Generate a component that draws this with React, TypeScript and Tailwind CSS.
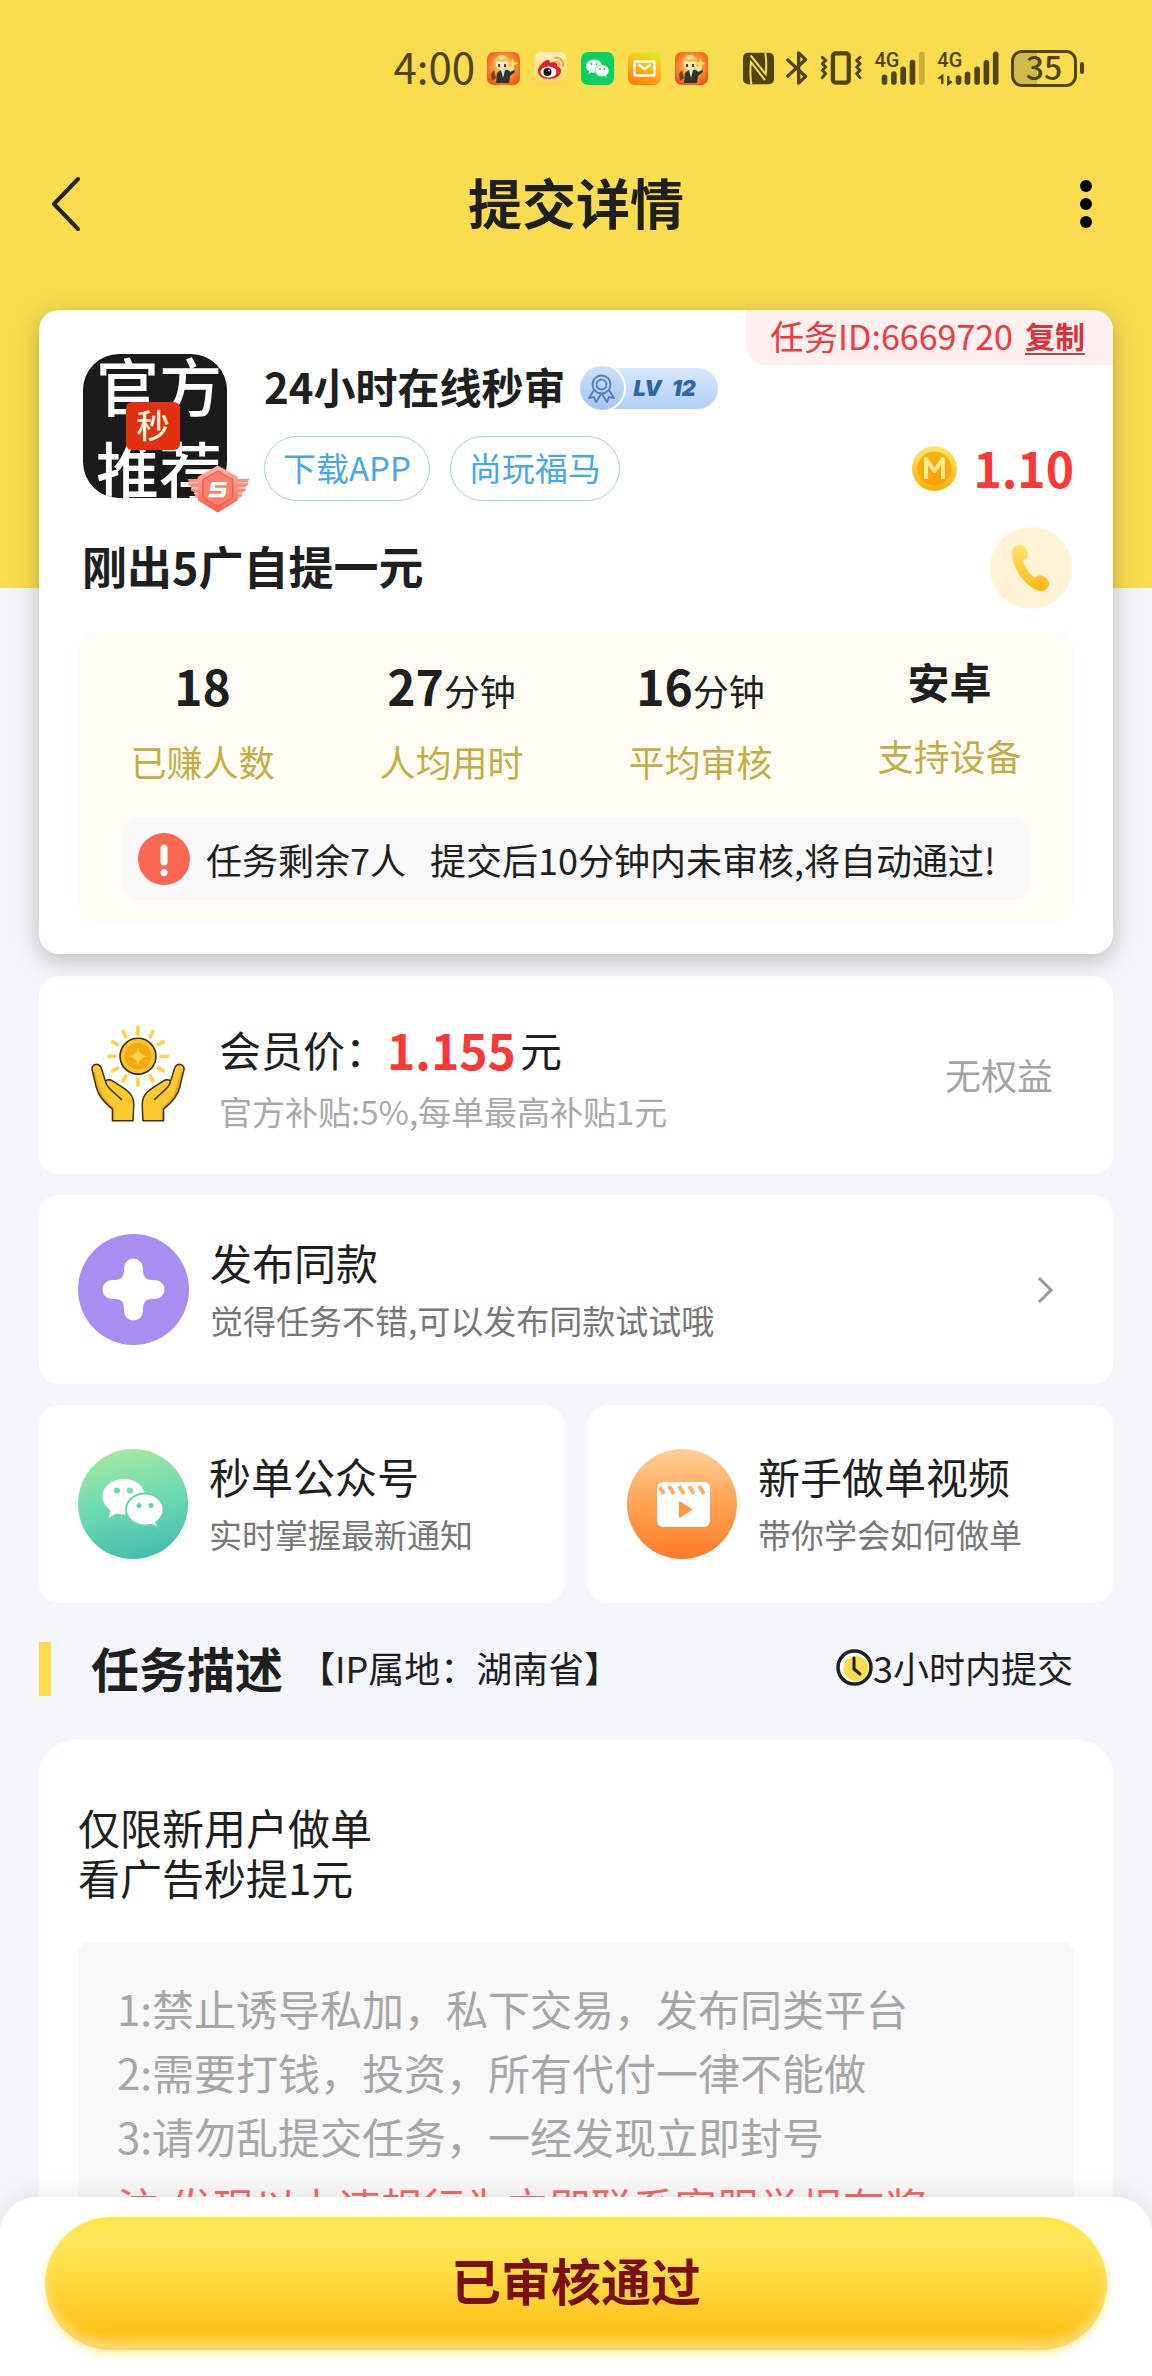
import React from 'react';

const INK = '#4f4412';

function MascotIcon() {
  return (
    <svg width="33" height="33" viewBox="0 0 33 33" aria-hidden="true">
      <defs>
        <radialGradient id="mascotBg" cx="0.5" cy="0.45" r="0.7">
          <stop offset="0" stopColor="#ffd46b" />
          <stop offset="0.55" stopColor="#f58a2c" />
          <stop offset="1" stopColor="#e8401f" />
        </radialGradient>
      </defs>
      <rect width="33" height="33" rx="7" fill="url(#mascotBg)" />
      <path d="M4 22l3-4 2 8-4 3z" fill="#7d3d12" />
      <path d="M9 31l1-10 4-3h6l3 1 4-2 1 3-5 4-1 7z" fill="#2e3230" />
      <path d="M14 18l2 8 2-8z" fill="#f7ead6" />
      <path d="M20 15l6-1 1 4-4 2z" fill="#ffe3a6" />
      <ellipse cx="15" cy="12" rx="6.500" ry="6" fill="#ffeccb" />
      <path d="M7 13c0-7 4-10 8-10s8 3 8 10l-3-4-5 1-5-1z" fill="#f9bd52" />
      <path d="M11 4l5-1 3 3-6 2z" fill="#ffe89a" />
      <rect x="11" y="12" width="2" height="3" fill="#8c2b16" />
      <rect x="17" y="12" width="2" height="3" fill="#8c2b16" />
      <path d="M26 6l1 4 4 1-4 2-1 4-2-4-3-2 3-1z" fill="#ffe45c" />
    </svg>
  );
}

function WeiboIcon() {
  return (
    <svg width="33" height="33" viewBox="0 0 33 33" aria-hidden="true">
      <defs>
        <linearGradient id="weiboBg" x1="0" y1="0" x2="0" y2="1">
          <stop offset="0" stopColor="#fdeec0" />
          <stop offset="1" stopColor="#fcd650" />
        </linearGradient>
      </defs>
      <rect width="33" height="33" rx="7" fill="url(#weiboBg)" />
      <path d="M11 9c3-2 5-1 5 2 4-2 8-1 7 3 3 1 4 3 4 5 0 5-6 8-12 8S4 24 4 19c0-4 4-8 7-10z" fill="#dd1f26" />
      <ellipse cx="14.500" cy="20" rx="8" ry="5.500" fill="#fff" />
      <circle cx="13.500" cy="20" r="4" fill="#111" />
      <circle cx="15" cy="18.500" r="1" fill="#fff" />
      <path d="M21 6c5-1 9 3 8 8M21.500 10c2.500-.5 4.200 1.500 3.700 4" fill="none" stroke="#f3a64a" strokeWidth="2" strokeLinecap="round" />
    </svg>
  );
}

function WechatAppIcon() {
  return (
    <svg width="33" height="33" viewBox="0 0 33 33" aria-hidden="true">
      <rect width="33" height="33" rx="7" fill="#0bd162" />
      <path d="M13 7.500c-4.600 0-8 3-8 6.500 0 2.200 1.200 4 3 5.200L7.300 22l3.100-1.600c.8.200 1.700.3 2.600.3 4.500 0 8-3 8-6.700s-3.400-6.500-8-6.500z" fill="#fff" />
      <path d="M21 12.800c-4 0-7 2.600-7 5.900s3 5.900 7 5.900c.8 0 1.500-.1 2.200-.3l2.600 1.400-.6-2.300c1.700-1.100 2.800-2.800 2.800-4.700 0-3.300-3-5.900-7-5.900z" fill="#fff" stroke="#0bd162" strokeWidth="0.600" />
      <circle cx="10.500" cy="12" r="1" fill="#0bd162" />
      <circle cx="15.500" cy="12" r="1" fill="#0bd162" />
      <circle cx="19" cy="17" r="0.900" fill="#0bd162" />
      <circle cx="23.300" cy="17" r="0.900" fill="#0bd162" />
    </svg>
  );
}

function MailIcon() {
  return (
    <svg width="33" height="33" viewBox="0 0 33 33" aria-hidden="true">
      <defs>
        <linearGradient id="mailBg" x1="0.700" y1="0" x2="0.300" y2="1">
          <stop offset="0" stopColor="#dcec1e" />
          <stop offset="0.450" stopColor="#fdb913" />
          <stop offset="1" stopColor="#ff7d0a" />
        </linearGradient>
      </defs>
      <rect width="33" height="33" rx="7" fill="url(#mailBg)" />
      <rect x="6.500" y="9.500" width="20" height="14" rx="1" fill="none" stroke="#fff" strokeWidth="2.400" />
      <path d="M10.500 12.500l6 4.800 6-4.800" fill="none" stroke="#fff" strokeWidth="2.400" />
    </svg>
  );
}

function NfcIcon() {
  return (
    <svg width="31" height="33" viewBox="27 34 93 98" aria-hidden="true">
      <rect x="27" y="36" width="93" height="94" rx="15" fill={INK} />
      <path d="M52 130q-5-34-1-66l42 54M94 36q5 34 1 64L50 44" fill="none" stroke="#f9dd4e" strokeWidth="6" />
    </svg>
  );
}

function BluetoothIcon() {
  return (
    <svg width="22" height="34" viewBox="154 30 66 103" aria-hidden="true">
      <path d="M159 57l54 50-21 20V36l21 20-54 50" fill="none" stroke={INK} strokeWidth="10" strokeLinejoin="round" strokeLinecap="round" />
    </svg>
  );
}

function VibrateIcon() {
  return (
    <svg width="42" height="34" viewBox="257 31 127 102" aria-hidden="true">
      <rect x="296" y="38" width="48" height="88" rx="8" fill="none" stroke={INK} strokeWidth="13" />
      <path d="M264 50l10 9-10 10 10 10-10 10 10 10-10 12M378 50l-10 9 10 10-10 10 10 10-10 10 10 12" fill="none" stroke={INK} strokeWidth="9" strokeLinejoin="round" strokeLinecap="round" />
    </svg>
  );
}

function SignalOne() {
  return (
    <svg className="overflow-visible" width="51" height="34" viewBox="419 31 152 102" aria-hidden="true">
      <text x="420" y="80" fontSize="60" fontWeight="500" fill={INK} fontFamily="Roboto, sans-serif">4G</text>
      <g stroke={INK} strokeWidth="17" strokeLinecap="round">
        <path d="M450 110v14M478 100v24M506 86v38M534 66v58" />
        <path d="M562 41v83" opacity="0.300" />
      </g>
    </svg>
  );
}

function SignalTwo() {
  return (
    <svg className="overflow-visible" width="62" height="34" viewBox="606 31 187 102" aria-hidden="true">
      <text x="607" y="80" fontSize="60" fontWeight="500" fill={INK} fontFamily="Roboto, sans-serif">4G</text>
      <path d="M610 114l12-8v24M650 122l-10 8v-24" fill="none" stroke={INK} strokeWidth="7" />
      <g stroke={INK} strokeWidth="17" strokeLinecap="round">
        <path d="M671 112v12M698 101v23M727 86v38M755 66v58M783 41v83" />
      </g>
    </svg>
  );
}

function StatusBar() {
  return (
    <div className="flex h-[136px] items-center justify-end pr-[68px] text-[#4f4412]">
      <span className="mr-3 pb-1 text-[42px] leading-none">4:00</span>
      <div className="flex gap-[14px]">
        <MascotIcon />
        <WeiboIcon />
        <WechatAppIcon />
        <MailIcon />
        <MascotIcon />
      </div>
      <div className="ml-[35px] flex items-center gap-3">
        <NfcIcon />
        <BluetoothIcon />
        <VibrateIcon />
        <SignalOne />
        <SignalTwo />
        <div className="flex items-center gap-[3px]">
          <div className="flex h-[37px] w-[66px] items-center justify-center rounded-[11px] border-[3px] border-[#4f4412] bg-[linear-gradient(90deg,#d0bc4c_38%,transparent_38%)] pb-1 text-[32px] font-medium leading-[30px]">
            <span>35</span>
          </div>
          <div className="h-3 w-1 rounded-full bg-[#4f4412]" />
        </div>
      </div>
    </div>
  );
}

function NavBar() {
  return (
    <header className="flex h-[136px] items-center justify-between px-12">
      <button type="button" aria-label="返回" className="flex h-16 w-16 items-center">
        <svg width="36" height="58" viewBox="0 0 36 58" aria-hidden="true">
          <path d="M30 4L6 29l24 25" fill="none" stroke="#222" strokeWidth="4" strokeLinecap="round" strokeLinejoin="round" />
        </svg>
      </button>
      <h1 className="pb-1 text-[54px] font-bold leading-[72px]">提交详情</h1>
      <button type="button" aria-label="更多" className="flex h-16 w-16 items-center justify-end pr-3">
        <svg width="12" height="48" viewBox="0 0 12 48" aria-hidden="true">
          <circle cx="6" cy="6" r="6" />
          <circle cx="6" cy="24" r="6" />
          <circle cx="6" cy="42" r="6" />
        </svg>
      </button>
    </header>
  );
}

function AppLogo() {
  return (
    <div className="relative h-36 w-36 shrink-0">
      <div className="flex h-full flex-col justify-between overflow-hidden rounded-[36px] bg-[#1a1a1a] pl-[13px] text-[63px] font-medium leading-[60px] text-white">
        <span className="whitespace-nowrap">官方</span>
        <span className="whitespace-nowrap">推荐</span>
      </div>
      <span className="absolute left-[43px] top-12 flex h-12 w-[54px] items-center justify-center rounded-md bg-[#e0300f] pb-1 text-[33px] font-medium leading-none text-[#fff4d8]">
        秒
      </span>
      <svg className="absolute left-[104px] top-[111px]" width="63" height="48" viewBox="385 408 190 144" aria-hidden="true">
        <defs>
          <linearGradient id="badgeFill" x1="0" y1="0" x2="0" y2="1">
            <stop offset="0" stopColor="#ffb3a2" />
            <stop offset="1" stopColor="#f3624f" />
          </linearGradient>
        </defs>
        <path d="M386 450h40v60l-18-8 2-10-14-8 4-9-12-9 4-6z" fill="#f98d7b" />
        <path d="M573 450h-40v60l18-8-2-10 14-8-4-9 12-9-4-6z" fill="#f98d7b" />
        <path d="M392 461h30M398 477h24M406 493h18M568 461h-30M562 477h-24M553 493h-18" stroke="#ffd0c4" strokeWidth="4" />
        <path d="M478 409l60 34v72l-60 36-60-36v-72z" fill="url(#badgeFill)" />
        <path d="M478 426l45 26v54l-45 27-45-27v-54z" fill="#fb7f6e" stroke="#e8503f" strokeWidth="3" />
        <path d="M506 459h-44l-6 6-3 20h36l-2 9h-36l-2 11h45l7-7 3-22h-36l2-7h34z" fill="#fff" />
      </svg>
    </div>
  );
}

function LevelBadge() {
  return (
    <span className="flex h-12 items-center">
      <span className="z-10 flex h-12 w-12 items-center justify-center rounded-full border-2 border-white bg-[linear-gradient(#cfe0f8,#a5c6f4)]">
        <svg width="27" height="29" viewBox="0 0 27 29" fill="none" stroke="#4f7db5" strokeWidth="1.800" aria-hidden="true">
          <circle cx="13.500" cy="10.500" r="9" />
          <circle cx="13.500" cy="10.500" r="5" />
          <path d="M6 16l-5 8 5-1 2 5 5-8M21 16l5 8-5-1-2 5-5-8" />
        </svg>
      </span>
      <span className="-ml-4 flex h-[41px] w-[108px] items-center gap-[10px] rounded-r-full bg-[linear-gradient(#d6e8fc,#b3cff8)] pl-6 font-[Inter,sans-serif] text-[22px] font-black italic leading-none text-[#2f65a0]">
        <span>LV</span>
        <span>12</span>
      </span>
    </span>
  );
}

function CoinIcon() {
  return (
    <svg width="45" height="45" viewBox="0 0 45 45" aria-hidden="true">
      <defs>
        <linearGradient id="coinRim" x1="0" y1="0" x2="0" y2="1">
          <stop offset="0" stopColor="#ffe76a" />
          <stop offset="1" stopColor="#f5b20a" />
        </linearGradient>
        <linearGradient id="coinCore" x1="0" y1="0" x2="0" y2="1">
          <stop offset="0" stopColor="#f7b30d" />
          <stop offset="1" stopColor="#ff9d0a" />
        </linearGradient>
      </defs>
      <circle cx="22.500" cy="22.500" r="22.500" fill="url(#coinRim)" />
      <circle cx="22.500" cy="22.500" r="17" fill="url(#coinCore)" />
      <path d="M14 33V13l8.500 12L31 13v20" fill="none" stroke="#ffea8a" strokeWidth="4" strokeLinejoin="round" />
    </svg>
  );
}

function PhoneIcon() {
  return (
    <svg width="40" height="48" viewBox="0 0 40 48" aria-hidden="true">
      <defs>
        <linearGradient id="phoneFill" x1="0" y1="0" x2="0" y2="1">
          <stop offset="0" stopColor="#ffe46e" />
          <stop offset="1" stopColor="#fdb80c" />
        </linearGradient>
      </defs>
      <path d="M3 3.500C5 1 10 0 13 2.500c3.500 3 4.500 8 3 11-1 1.800-3.200 1.600-3.600 3.300-.6 3 7.600 15.800 11.400 16.400 2 .3 2.600-2 5-2 4 0 8.700 3.600 9.200 8 .3 3.500-3.500 8-8 7.800C17 46 1 25 1 10c0-2.600.6-4.700 2-6.500z" fill="url(#phoneFill)" />
    </svg>
  );
}

const stats = [
  { value: '18', unit: '', label: '已赚人数' },
  { value: '27', unit: '分钟', label: '人均用时' },
  { value: '16', unit: '分钟', label: '平均审核' },
];

function TaskCard() {
  return (
    <section className="relative rounded-[20px] bg-white px-[39px] pb-[33px] pt-11 shadow-[0_6px_24px_rgba(0,0,0,0.25)]">
      <div className="absolute right-0 top-0 flex h-[55px] items-center gap-3 rounded-bl-[20px] rounded-tr-[20px] bg-[#fff0f0] pb-1 pl-6 pr-7 text-[#ee3a40]">
        <span className="text-[34px] leading-none">任务ID:6669720</span>
        <button type="button" className="border-b-2 border-[#b8474c] text-[30px] font-bold leading-[36px] text-[#d8353b]">
          复制
        </button>
      </div>

      <div className="flex gap-[37px] pl-[5px]">
        <AppLogo />
        <div className="min-w-0 flex-1 pt-[9px]">
          <div className="flex items-center gap-3">
            <h2 className="whitespace-nowrap pb-1 text-[42px] font-bold leading-[46px]">24小时在线秒审</h2>
            <LevelBadge />
          </div>
          <div className="mt-[23px] flex items-center justify-between">
            <div className="flex gap-5 text-[33px] leading-none text-[#4aa8e8]">
              <span className="flex h-[65px] items-center rounded-full border border-[#a5d0e8] px-[18px] pb-[2px]">下载APP</span>
              <span className="flex h-[65px] items-center rounded-full border border-[#a5d0e8] px-[18px] pb-[2px]">尚玩福马</span>
            </div>
            <div className="flex items-center gap-4">
              <CoinIcon />
              <span className="pb-1 text-[48px] font-bold leading-none text-[#fb3838]">1.10</span>
            </div>
          </div>
        </div>
      </div>

      <div className="mt-[26px] flex items-center justify-between pl-1 pr-[2px]">
        <p className="pb-1 text-[45px] font-bold leading-[60px]">刚出5广自提一元</p>
        <button type="button" aria-label="联系电话" className="flex h-[82px] w-[82px] items-center justify-center rounded-full bg-[#fff3d6]">
          <PhoneIcon />
        </button>
      </div>

      <div className="mt-6 rounded-[20px] bg-[#fffdf3] pb-[21px] pt-[22px] text-center">
        <dl className="grid grid-cols-4">
          {stats.map((s) => (
            <div key={s.label} className="flex flex-col-reverse gap-5">
              <dt className="text-[36px] leading-[52px] text-[#c3ad48]">{s.label}</dt>
              <dd className="text-[48px] font-bold leading-[60px]">
                {s.value}
                <span className="text-[36px] font-normal leading-none">{s.unit}</span>
              </dd>
            </div>
          ))}
          <div className="flex flex-col-reverse justify-end gap-[22px]">
            <dt className="text-[36px] leading-[52px] text-[#c3ad48]">支持设备</dt>
            <dd className="text-[42px] font-bold leading-[52px]">安卓</dd>
          </div>
        </dl>
        <div className="mx-[45px] mt-[30px] flex h-[83px] items-center gap-4 rounded-2xl bg-[#f8f8f8] pl-[15px]">
          <svg className="shrink-0" width="52" height="52" viewBox="0 0 52 52" aria-hidden="true">
            <circle cx="26" cy="26" r="26" fill="#fb6852" />
            <path d="M26 15v14" stroke="#fff" strokeWidth="7" strokeLinecap="round" />
            <circle cx="26" cy="39.500" r="3.500" fill="#fff" />
          </svg>
          <p className="flex gap-6 whitespace-nowrap text-[36px] leading-[52px]">
            <span>任务剩余7人</span>
            <span>提交后10分钟内未审核,将自动通过!</span>
          </p>
        </div>
      </div>
    </section>
  );
}

function Hand() {
  return (
    <g>
      <path d="M97 307v-35C75 255 55 235 48 205L36 155c-3-12 6-18 14-18 8 1 12 6 14 13l12 38c4-5 14-6 21-1l33 21c25 17 33 32 31 57l-2 42z" fill="#fcca2d" />
      <path d="M100 304v-34C80 252 62 235 54 205L42 160" fill="none" stroke="#e8a71c" strokeWidth="6" />
      <path d="M97 307v-35C75 255 55 235 48 205L36 155c-3-12 6-18 14-18 8 1 12 6 14 13l12 38c4-5 14-6 21-1l33 21c25 17 33 32 31 57l-2 42zM76 188c2 18 20 28 48 55" fill="none" stroke="#3f2d0c" strokeWidth="4.500" strokeLinejoin="round" strokeLinecap="round" />
    </g>
  );
}

function HandsIcon() {
  return (
    <svg className="mt-1 shrink-0 self-start" width="94" height="97" viewBox="33 19 282 292" aria-hidden="true">
      <g stroke="#fbd44a" strokeWidth="11" strokeLinecap="round">
        <path d="M174 25v22M174 182v18M86 113h18M244 113h18M129 38l8 17M219 38l-8 17M98 70l15 8M250 70l-15 8M98 157l15-8M250 157l-15-8M129 188l8-16M219 188l-8-16" />
      </g>
      <circle cx="174" cy="113" r="54" fill="#fbc52e" stroke="#3f2d0c" strokeWidth="5" />
      <circle cx="174" cy="113" r="40" fill="#f3a912" />
      <path d="M174 85q4 24 27 28-23 4-27 28-4-24-27-28 23-4 27-28z" fill="#ffd54a" />
      <Hand />
      <g transform="matrix(-1 0 0 1 348 0)">
        <Hand />
      </g>
    </svg>
  );
}

function WechatRound() {
  return (
    <svg className="shrink-0" width="110" height="110" viewBox="0 0 110 110" aria-hidden="true">
      <defs>
        <linearGradient id="wechatRound" x1="0.400" y1="0" x2="0.600" y2="1">
          <stop offset="0" stopColor="#a4e8a0" />
          <stop offset="0.450" stopColor="#70dcb0" />
          <stop offset="1" stopColor="#45bdae" />
        </linearGradient>
      </defs>
      <circle cx="55" cy="55" r="55" fill="url(#wechatRound)" />
      <path d="M46 30c-12.500 0-21.500 8-21.500 17.500 0 5.800 3.200 10.600 8 13.800L30.500 69l8-4.500c2.500.6 5 .9 7.500.9 12 0 21-8 21-17.900S58 30 46 30z" fill="#fff" />
      <path d="M67 44.500c-10.700 0-19 7.200-19 16s8.300 16 19 16c2.300 0 4.300-.3 6.300-.8l6.700 3.300-1.800-6c4.700-2.900 7.300-7.300 7.300-12.500 0-8.800-8.300-16-18.500-16z" fill="#fff" stroke="#66d4b0" strokeWidth="2" />
      <circle cx="39" cy="41.500" r="3" fill="#70dcb0" />
      <circle cx="52" cy="41.500" r="3" fill="#70dcb0" />
      <circle cx="61" cy="56.500" r="2.500" fill="#62d0b0" />
      <circle cx="73" cy="56.500" r="2.500" fill="#62d0b0" />
    </svg>
  );
}

function VideoRound() {
  return (
    <svg className="shrink-0" width="110" height="110" viewBox="0 0 110 110" aria-hidden="true">
      <defs>
        <linearGradient id="videoRound" x1="0" y1="0" x2="0" y2="1">
          <stop offset="0" stopColor="#ffd098" />
          <stop offset="0.500" stopColor="#ffa352" />
          <stop offset="1" stopColor="#ff7b28" />
        </linearGradient>
      </defs>
      <circle cx="55" cy="55" r="55" fill="url(#videoRound)" />
      <rect x="30" y="33" width="53" height="45" rx="6" fill="#fff" />
      <path d="M33 38l4 7M42 37l5 8M52 37l5 8M62 37l5 8M72 37l5 8" stroke="#ffb066" strokeWidth="4" />
      <path d="M52 53.500v14q0 1.500 1.500.8l11-7q1-.8 0-1.600l-11-7q-1.500-.7-1.500.8z" fill="#ff9640" />
    </svg>
  );
}

function MemberCard() {
  return (
    <section className="mt-[22px] flex items-center rounded-[20px] bg-white pb-[39px] pl-[52px] pr-[60px] pt-[45px]">
      <HandsIcon />
      <div className="ml-[34px] flex-1">
        <p className="flex items-center text-[42px] leading-[56px]">
          会员价：
          <strong className="mr-1 text-[48px] font-bold text-[#fb3838]">1.155</strong>元
        </p>
        <p className="mt-[10px] text-[33px] leading-[48px] text-[#a9a9a9]">官方补贴:5%,每单最高补贴1元</p>
      </div>
      <span className="pb-2 text-[36px] leading-[48px] text-[#a3a3a3]">无权益</span>
    </section>
  );
}

function PublishCard() {
  return (
    <button type="button" className="mt-[21px] flex w-full items-center rounded-[20px] bg-white py-[39px] pl-[39px] pr-[59px] text-left">
      <svg className="shrink-0" width="111" height="111" viewBox="0 0 111 111" aria-hidden="true">
        <circle cx="55.500" cy="55.500" r="55.500" fill="#a98ef2" />
        <path d="M46 34a9.500 9.500 0 0 1 19 0v3q0 9 9 9h3a9.500 9.500 0 0 1 0 19h-3q-9 0-9 9v3a9.500 9.500 0 0 1-19 0v-3q0-9-9-9h-3a9.500 9.500 0 0 1 0-19h3q9 0 9-9z" fill="#fff" />
      </svg>
      <span className="-my-1 ml-[21px] flex-1 pb-[2px]">
        <span className="block text-[42px] leading-[56px]">发布同款</span>
        <span className="mt-[6px] block text-[33px] leading-[48px] text-[#777]">觉得任务不错,可以发布同款试试哦</span>
      </span>
      <svg width="18" height="30" viewBox="0 0 18 30" aria-hidden="true">
        <path d="M3 3l12 12L3 27" fill="none" stroke="#999" strokeWidth="3" />
      </svg>
    </button>
  );
}

function LinkCard({ icon, title, note }: { icon: React.ReactNode; title: string; note: string }) {
  return (
    <button type="button" className="flex items-center rounded-[20px] bg-white py-11 pl-[39px] text-left">
      {icon}
      <span className="-my-1 ml-[21px] pb-[2px]">
        <span className="block text-[42px] leading-[56px]">{title}</span>
        <span className="mt-[6px] block text-[33px] leading-[48px] text-[#777]">{note}</span>
      </span>
    </button>
  );
}

function Description() {
  return (
    <>
      <div className="mt-[39px] flex items-center pr-10">
        <div className="h-[54px] w-3 bg-[#f9dd4e]" />
        <h2 className="ml-10 pb-1 text-[48px] font-bold leading-[50px]">任务描述</h2>
        <span className="ml-4 flex-1 pb-1 text-[36px] leading-[50px]">【IP属地：湖南省】</span>
        <svg className="-mt-1" width="37" height="37" viewBox="0 0 37 37" aria-hidden="true">
          <circle cx="18.500" cy="18.500" r="16.500" fill="#fff" stroke="#1f1f1f" strokeWidth="3.500" />
          <circle cx="20" cy="19.500" r="12.500" fill="#f9dd4e" />
          <path d="M18 9v11l6 5" fill="none" stroke="#1f1f1f" strokeWidth="3" strokeLinecap="round" />
        </svg>
        <span className="pb-1 text-[36px] leading-[50px]">3小时内提交</span>
      </div>
      <section className="mt-11 rounded-[36px] bg-white px-[39px] pb-16 pt-[62px]">
        <p className="text-[42px] leading-[50px]">
          仅限新用户做单
          <br />
          看广告秒提1元
        </p>
        <div className="mt-10 rounded-xl bg-[#f8f8f8] px-[39px] py-[34px] text-[42px] leading-[64px] text-[#a6a6a6]">
          <p>1:禁止诱导私加，私下交易，发布同类平台</p>
          <p>2:需要打钱，投资，所有代付一律不能做</p>
          <p>3:请勿乱提交任务，一经发现立即封号</p>
          <p className="mt-[6px] text-[#f4696c]">注:发现以上违规行为立即联系客服举报有奖</p>
        </div>
      </section>
    </>
  );
}

export default function App() {
  return (
    <div lang="zh-CN" className="flex h-screen flex-col bg-[#f5f6fb] font-['Noto_Sans_CJK_SC',sans-serif] text-[#1f1f1f]">
      <div className="min-h-0 flex-1 overflow-y-auto bg-[linear-gradient(#f9dd4e_588px,#f5f6fb_588px)] [scrollbar-width:none]">
        <StatusBar />
        <NavBar />
        <main className="px-[39px] pb-12 pt-[38px]">
          <TaskCard />
          <MemberCard />
          <PublishCard />
          <div className="mt-[21px] grid grid-cols-2 gap-6">
            <LinkCard icon={<WechatRound />} title="秒单公众号" note="实时掌握最新通知" />
            <LinkCard icon={<VideoRound />} title="新手做单视频" note="带你学会如何做单" />
          </div>
          <Description />
        </main>
      </div>
      <footer className="relative z-10 -mt-9 shrink-0 rounded-t-[36px] bg-white px-[45px] pb-[26px] pt-5 shadow-[0_-4px_24px_rgba(0,0,0,0.08)]">
        <button
          type="button"
          className="h-[133px] w-full rounded-full bg-[linear-gradient(#ffe744_0%,#ffe75c_18%,#ffd83a_50%,#ffc219_85%,#ffc219_100%)] pb-2 text-[50px] font-bold text-[#7a1013] shadow-[inset_0_-10px_10px_rgba(255,255,255,0.35),0_4px_10px_rgba(255,226,110,0.6)]"
        >
          已审核通过
        </button>
      </footer>
    </div>
  );
}
